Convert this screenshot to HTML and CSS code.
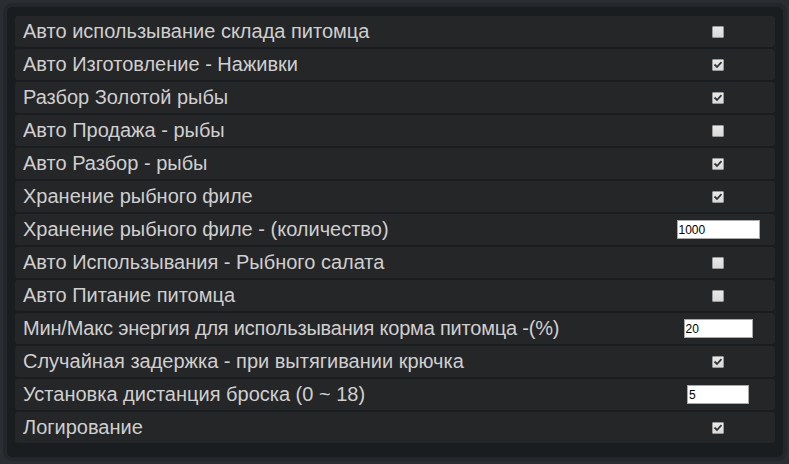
FILE: index.html
```html
<!DOCTYPE html>
<html lang="ru">
<head>
<meta charset="utf-8">
<link rel="stylesheet" href="styles.css">
</head>
<body>
<div class="panel">
  <div class="row"><span class="label">Авто использывание склада питомца</span><span class="ctl"><span class="cb"></span></span></div>
  <div class="row"><span class="label">Авто Изготовление - Наживки</span><span class="ctl"><span class="cb on"><svg viewBox="0 0 12 12"><path d="M2.6 6.2 L4.8 8.4 L9.4 3.4" /></svg></span></span></div>
  <div class="row"><span class="label">Разбор Золотой рыбы</span><span class="ctl"><span class="cb on"><svg viewBox="0 0 12 12"><path d="M2.6 6.2 L4.8 8.4 L9.4 3.4" /></svg></span></span></div>
  <div class="row"><span class="label">Авто Продажа - рыбы</span><span class="ctl"><span class="cb"></span></span></div>
  <div class="row"><span class="label">Авто Разбор - рыбы</span><span class="ctl"><span class="cb on"><svg viewBox="0 0 12 12"><path d="M2.6 6.2 L4.8 8.4 L9.4 3.4" /></svg></span></span></div>
  <div class="row"><span class="label">Хранение рыбного филе</span><span class="ctl"><span class="cb on"><svg viewBox="0 0 12 12"><path d="M2.6 6.2 L4.8 8.4 L9.4 3.4" /></svg></span></span></div>
  <div class="row"><span class="label">Хранение рыбного филе - (количество)</span><span class="ctl"><input class="num w83" type="text" value="1000"></span></div>
  <div class="row"><span class="label">Авто Использывания - Рыбного салата</span><span class="ctl"><span class="cb"></span></span></div>
  <div class="row"><span class="label">Авто Питание питомца</span><span class="ctl"><span class="cb"></span></span></div>
  <div class="row"><span class="label tight">Мин/Макс энергия для использывания корма питомца -(%)</span><span class="ctl"><input class="num w69" type="text" value="20"></span></div>
  <div class="row"><span class="label">Случайная задержка - при вытягивании крючка</span><span class="ctl"><span class="cb on"><svg viewBox="0 0 12 12"><path d="M2.6 6.2 L4.8 8.4 L9.4 3.4" /></svg></span></span></div>
  <div class="row"><span class="label">Установка дистанция броска (0 ~ 18)</span><span class="ctl"><input class="num w62" type="text" value="5"></span></div>
  <div class="row"><span class="label">Логирование</span><span class="ctl"><span class="cb on"><svg viewBox="0 0 12 12"><path d="M2.6 6.2 L4.8 8.4 L9.4 3.4" /></svg></span></span></div>
</div>
</body>
</html>
```

FILE: styles.css
```css
html, body {
  margin: 0;
  padding: 0;
  background: #2a2e33;
  height: 464px;
  overflow: hidden;
}
body {
  padding: 3px 2px 3px 3px;
  box-sizing: border-box;
}
.panel {
  box-sizing: border-box;
  height: 458px;
  border: 4px solid #23272b;
  border-radius: 9px;
  background: #1a1d1f;
  padding: 9px 8px 14px 8px;
  display: flex;
  flex-direction: column;
  gap: 2px;
}
.row {
  box-sizing: border-box;
  height: 31px;
  background: #252628;
  border-radius: 3px;
  display: grid;
  grid-template-columns: 1fr 114px;
  align-items: center;
  padding-left: 8px;
  padding-bottom: 1px;
}
.label {
  font-family: "Liberation Sans", Arial, sans-serif;
  font-size: 20px;
  color: #cfcfcf;
  white-space: nowrap;
}
.label.tight {
  letter-spacing: -0.2px;
}
.ctl {
  display: flex;
  justify-content: center;
  align-items: center;
  padding-top: 1px;
}
.cb {
  box-sizing: border-box;
  width: 12px;
  height: 12px;
  border: 1px solid #9a9a9a;
  border-radius: 1px;
  background: linear-gradient(#e9e9e9, #d9d9d9);
  display: flex;
  align-items: center;
  justify-content: center;
}
.cb svg {
  width: 10px;
  height: 10px;
}
.cb svg path {
  fill: none;
  stroke: #333;
  stroke-width: 2.2;
  stroke-linecap: square;
}
.num {
  box-sizing: border-box;
  height: 19px;
  border: 1px solid #a9a9a9;
  background: #fff;
  color: #000;
  font-family: "Liberation Sans", Arial, sans-serif;
  font-size: 12px;
  padding: 0 1px;
  margin: 0;
  outline: none;
}
.w83 { width: 83px; }
.w69 { width: 69px; }
.w62 { width: 62px; }
```
